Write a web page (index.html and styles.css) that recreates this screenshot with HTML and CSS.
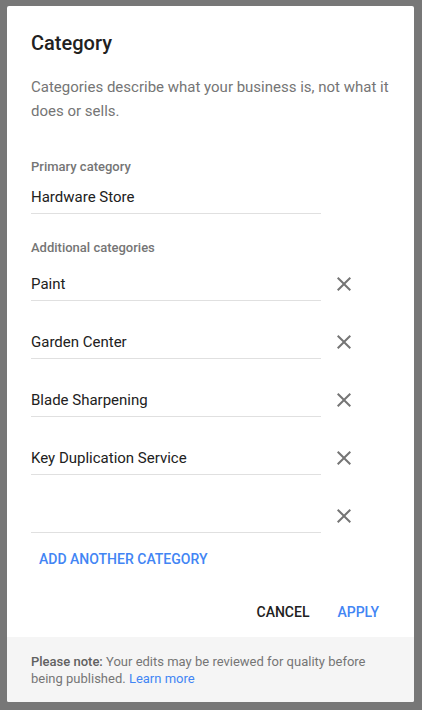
FILE: index.html
```html
<!DOCTYPE html>
<html lang="en">
<head>
    <meta charset="UTF-8">
    <meta name="viewport" content="width=device-width, initial-scale=1.0">
    <title>Category</title>
    <link rel="stylesheet" href="styles.css">
</head>
<body>
    <div class="dialog">
        <div class="dialog-body">
            <h1>Category</h1>
            <p class="intro">Categories describe what your business is, not what it does or sells.</p>

            <div class="label">Primary category</div>
            <div class="field">
                <div class="input">Hardware Store</div>
            </div>

            <div class="label extra-label">Additional categories</div>
            <div class="rows">
                <div class="row">
                    <div class="input">Paint</div>
                    <button class="remove" aria-label="Remove">
                        <svg viewBox="0 0 24 24" width="24" height="24"><path d="M19 6.41L17.59 5 12 10.59 6.41 5 5 6.41 10.59 12 5 17.59 6.41 19 12 13.41 17.59 19 19 17.59 13.41 12z"/></svg>
                    </button>
                </div>
                <div class="row">
                    <div class="input">Garden Center</div>
                    <button class="remove" aria-label="Remove">
                        <svg viewBox="0 0 24 24" width="24" height="24"><path d="M19 6.41L17.59 5 12 10.59 6.41 5 5 6.41 10.59 12 5 17.59 6.41 19 12 13.41 17.59 19 19 17.59 13.41 12z"/></svg>
                    </button>
                </div>
                <div class="row">
                    <div class="input">Blade Sharpening</div>
                    <button class="remove" aria-label="Remove">
                        <svg viewBox="0 0 24 24" width="24" height="24"><path d="M19 6.41L17.59 5 12 10.59 6.41 5 5 6.41 10.59 12 5 17.59 6.41 19 12 13.41 17.59 19 19 17.59 13.41 12z"/></svg>
                    </button>
                </div>
                <div class="row">
                    <div class="input">Key Duplication Service</div>
                    <button class="remove" aria-label="Remove">
                        <svg viewBox="0 0 24 24" width="24" height="24"><path d="M19 6.41L17.59 5 12 10.59 6.41 5 5 6.41 10.59 12 5 17.59 6.41 19 12 13.41 17.59 19 19 17.59 13.41 12z"/></svg>
                    </button>
                </div>
                <div class="row">
                    <div class="input"></div>
                    <button class="remove" aria-label="Remove">
                        <svg viewBox="0 0 24 24" width="24" height="24"><path d="M19 6.41L17.59 5 12 10.59 6.41 5 5 6.41 10.59 12 5 17.59 6.41 19 12 13.41 17.59 19 19 17.59 13.41 12z"/></svg>
                    </button>
                </div>
            </div>

            <button class="text-button add">Add another category</button>

            <div class="actions">
                <button class="text-button cancel">Cancel</button>
                <button class="text-button">Apply</button>
            </div>
        </div>

        <div class="note">
            <strong>Please note:</strong> Your edits may be reviewed for quality before being published. <a href="#">Learn more</a>
        </div>
    </div>
</body>
</html>
```

FILE: styles.css
```css
body {
    margin: 0;
    padding: 6px 8px 8px 7px;
    background-color: #777777;
    font-family: 'Roboto', 'Liberation Sans', sans-serif;
}
.dialog {
    width: 407px;
    height: 696px;
    background-color: #ffffff;
    border-radius: 2px;
    display: flex;
    flex-direction: column;
    overflow: hidden;
}
.dialog-body {
    flex: 1;
    padding: 23px 20px 0 24px;
}
h1 {
    margin: 0;
    font-size: 20px;
    line-height: 28px;
    font-weight: 500;
    color: #212121;
}
.intro {
    margin: 18px 0 0;
    font-size: 15px;
    line-height: 24px;
    color: #757575;
}
.label {
    margin-top: 34px;
    font-size: 13px;
    line-height: 20px;
    font-weight: 500;
    color: #757575;
}
.extra-label {
    margin-top: 24px;
}
.field {
    width: 290px;
    padding-top: 8px;
}
.input {
    width: 290px;
    height: 24px;
    padding-bottom: 4px;
    border-bottom: 1px solid #e0e0e0;
    font-size: 15px;
    line-height: 24px;
    color: #212121;
}
.rows {
    display: flex;
    flex-direction: column;
    gap: 29px;
    margin-top: 14px;
}
.row {
    display: flex;
    align-items: flex-start;
}
.remove {
    width: 24px;
    height: 24px;
    margin-left: 11px;
    padding: 0;
    border: none;
    background: none;
    cursor: pointer;
}
.remove svg {
    display: block;
    fill: #757575;
}
.text-button {
    height: 36px;
    padding: 0 8px;
    border: none;
    background: none;
    font-family: inherit;
    font-size: 14px;
    font-weight: 500;
    line-height: 20px;
    text-transform: uppercase;
    color: #4285f4;
    cursor: pointer;
}
.add {
    display: block;
    margin-top: 8px;
}
.actions {
    display: flex;
    justify-content: flex-end;
    gap: 12px;
    margin-top: 17px;
    padding-right: 7px;
}
.cancel {
    color: #212121;
}
.note {
    background-color: #f5f5f5;
    padding: 16px 24px 15px;
    font-size: 13px;
    line-height: 17px;
    color: #757575;
}
.note strong {
    font-weight: 500;
    color: #616161;
}
.note a {
    color: #4285f4;
    text-decoration: none;
}
```
